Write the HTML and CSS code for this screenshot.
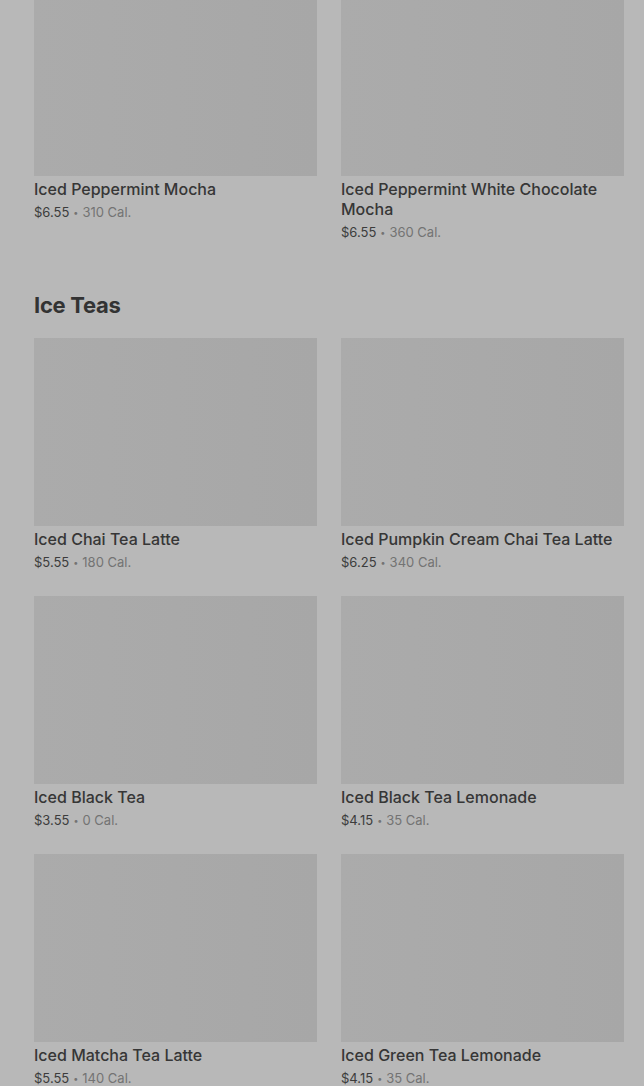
FILE: index.html
```html
<!DOCTYPE html>
<html lang="en">
<head>
    <meta charset="UTF-8">
    <meta name="viewport" content="width=device-width, initial-scale=1.0">
    <title>Menu</title>
    <link rel="stylesheet" href="styles.css">
</head>
<body>
    <div class="page">
        <div class="grid grid-top">
            <div class="item">
                <div class="thumb"></div>
                <div class="name">Iced Peppermint Mocha</div>
                <div class="meta"><span class="price">$6.55</span><span class="dot">•</span>310 Cal.</div>
            </div>
            <div class="item">
                <div class="thumb"></div>
                <div class="name">Iced Peppermint White Chocolate Mocha</div>
                <div class="meta"><span class="price">$6.55</span><span class="dot">•</span>360 Cal.</div>
            </div>
        </div>

        <h2 class="section-title">Ice Teas</h2>
        <div class="grid">
            <div class="item">
                <div class="thumb"></div>
                <div class="name">Iced Chai Tea Latte</div>
                <div class="meta"><span class="price">$5.55</span><span class="dot">•</span>180 Cal.</div>
            </div>
            <div class="item">
                <div class="thumb"></div>
                <div class="name">Iced Pumpkin Cream Chai Tea Latte</div>
                <div class="meta"><span class="price">$6.25</span><span class="dot">•</span>340 Cal.</div>
            </div>
            <div class="item">
                <div class="thumb"></div>
                <div class="name">Iced Black Tea</div>
                <div class="meta"><span class="price">$3.55</span><span class="dot">•</span>0 Cal.</div>
            </div>
            <div class="item">
                <div class="thumb"></div>
                <div class="name">Iced Black Tea Lemonade</div>
                <div class="meta"><span class="price">$4.15</span><span class="dot">•</span>35 Cal.</div>
            </div>
            <div class="item">
                <div class="thumb"></div>
                <div class="name">Iced Matcha Tea Latte</div>
                <div class="meta"><span class="price">$5.55</span><span class="dot">•</span>140 Cal.</div>
            </div>
            <div class="item">
                <div class="thumb"></div>
                <div class="name">Iced Green Tea Lemonade</div>
                <div class="meta"><span class="price">$4.15</span><span class="dot">•</span>35 Cal.</div>
            </div>
        </div>
    </div>
</body>
</html>
```

FILE: styles.css
```css
body {
    margin: 0;
    padding: 0;
    background: #b8b8b8;
    font-family: Inter, "Noto Sans", sans-serif;
    color: #333;
    overflow: hidden;
}
.page {
    padding: 0 20px 0 34px;
    margin-top: -12px;
}
.grid {
    display: grid;
    grid-template-columns: 1fr 1fr;
    column-gap: 24px;
    row-gap: 24px;
}
.grid-top {
    margin-bottom: 47px;
}
.thumb {
    height: 188px;
    background: linear-gradient(90deg, #ababab 0%, #a9a9a9 50%, #a7a7a7 100%);
}
.name {
    margin-top: 3px;
    font-size: 16px;
    line-height: 20px;
    font-weight: 500;
    color: #363636;
}
.meta {
    margin-top: 3px;
    height: 20px;
    font-size: 13px;
    line-height: 20px;
    color: #737373;
}
.price {
    color: #3c3c3c;
}
.dot {
    margin: 0 4px;
    font-size: 9px;
    line-height: 0;
    vertical-align: 1px;
}
.section-title {
    margin: 0 0 17px;
    font-size: 22px;
    line-height: 32px;
    font-weight: 700;
    color: #333;
    letter-spacing: -0.3px;
}
```
